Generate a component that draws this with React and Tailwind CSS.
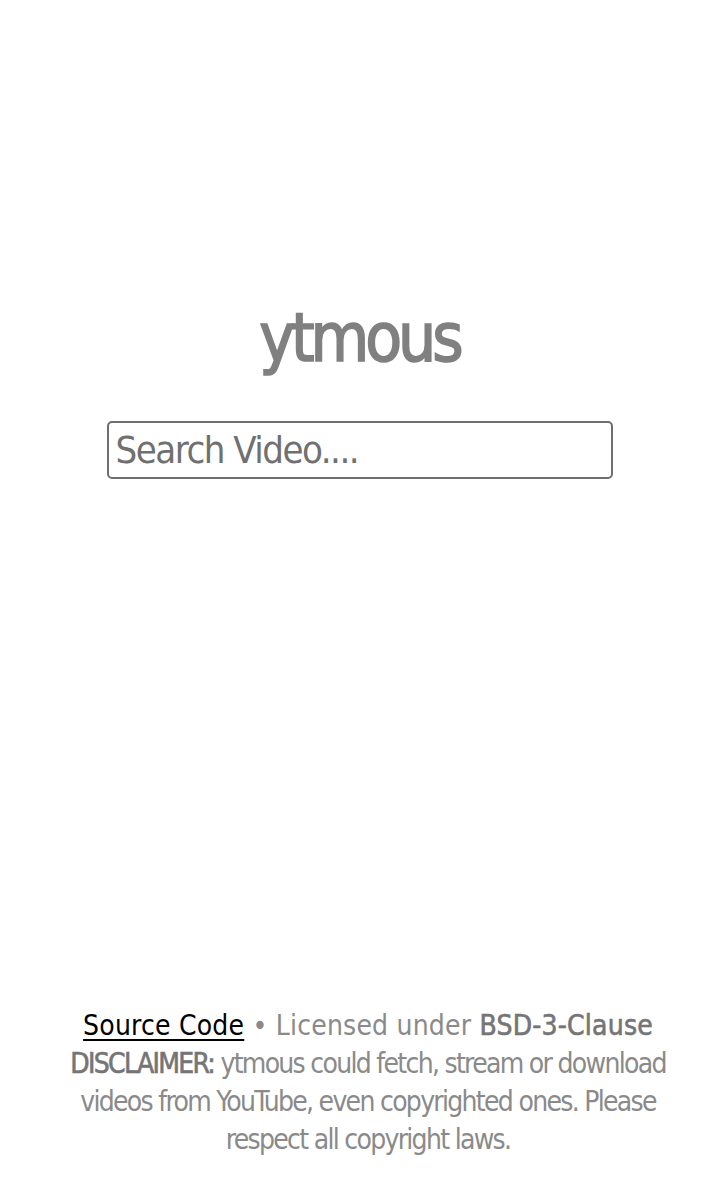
import React from 'react';

export default function App() {
    return (
        <div
            className="min-h-screen flex flex-col bg-white text-[#8a8a8a]"
            style={{ fontFamily: '"DejaVu Sans Condensed", "DejaVu Sans", sans-serif' }}
        >
            <main className="flex-1 flex flex-col items-center pt-[297px]">
                <h1 className="text-[67px] leading-[82px] font-normal tracking-[-4px] text-[#808080] [-webkit-text-stroke:1.6px_#808080]">ytmous</h1>
                <form className="mt-[42px]">
                    <input
                        type="text"
                        placeholder="Search Video...."
                        className="box-border w-[506px] h-[58px] border-2 border-[#6e6e6e] rounded-[5px] px-[7px] text-[38px] tracking-[-1.5px] text-[#6e6e6e] placeholder:text-[#707070] outline-none"
                    />
                </form>
            </main>

            {/* Footer */}
            <footer className="pl-[17px] pb-[37px] text-center text-[28px] leading-[38px]">
                <p className="tracking-[0.2px]">
                    <a href="#" className="text-black underline underline-offset-4">Source Code</a>
                    {' '}• Licensed under <span className="text-[#757575] [-webkit-text-stroke:0.6px_#757575]">BSD-3-Clause</span>
                </p>
                <p className="tracking-[-1.7px]">
                    <span className="text-[#757575] [-webkit-text-stroke:0.6px_#757575]">DISCLAIMER:</span> ytmous could fetch, stream or download
                    <br />
                    videos from YouTube, even copyrighted ones. Please
                    <br />
                    respect all copyright laws.
                </p>
            </footer>
        </div>
    );
}
